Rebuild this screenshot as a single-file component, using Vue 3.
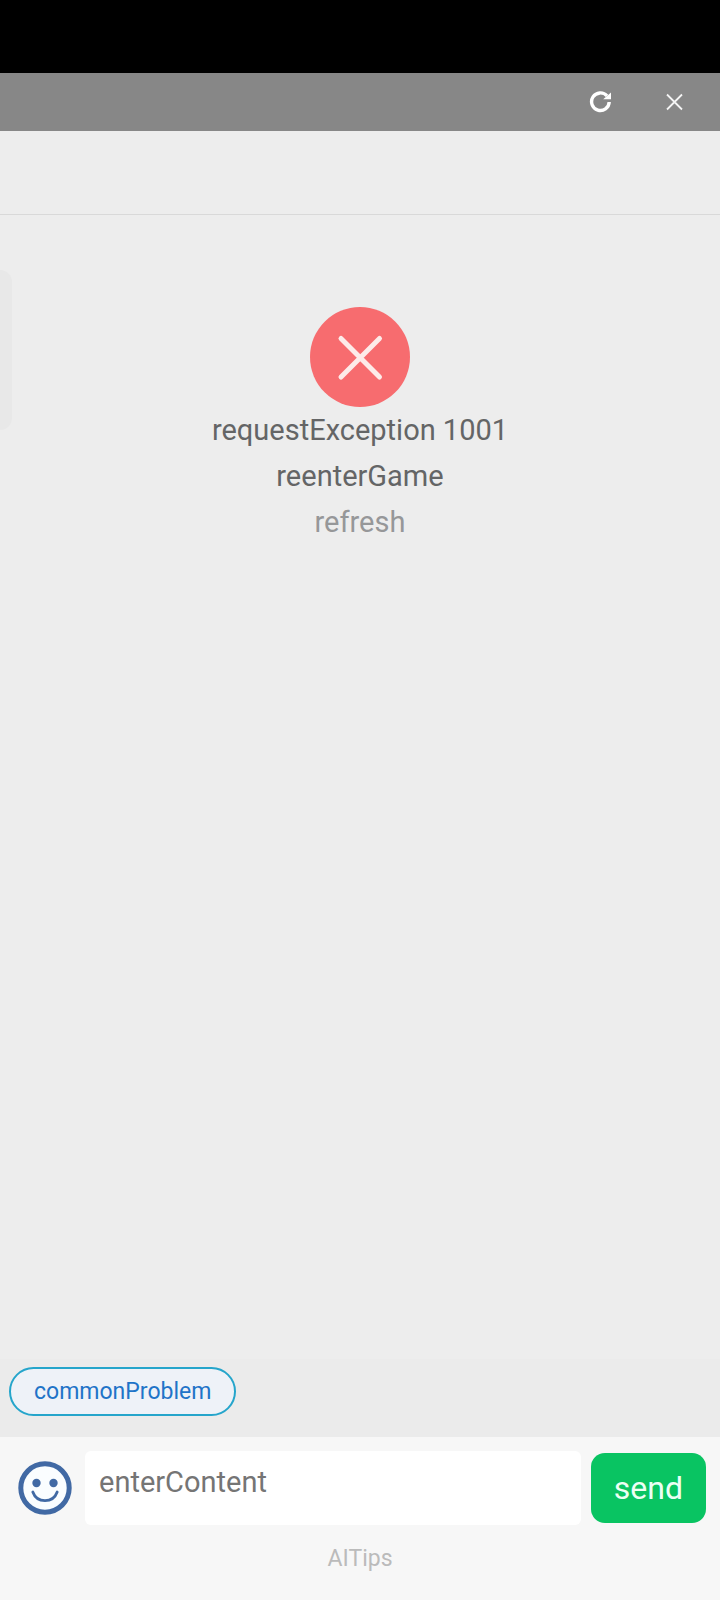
<script setup>
import { ref } from 'vue'

const message = ref('')
</script>

<template>
  <div class="page">
    <div class="status"></div>
    <div class="toolbar">
      <button class="tool" type="button" aria-label="Reload">
        <svg width="24" height="24" viewBox="0 0 24 24" fill="none">
          <path d="M20.2 12A8.800 8.800 0 1 1 18 5.900" stroke="#fff" stroke-width="3.4" />
          <path d="M22 2.500V9.300H14.200Z" fill="#fff" />
        </svg>
      </button>
      <button class="tool" type="button" aria-label="Close">
        <svg width="24" height="24" viewBox="0 0 24 24" fill="none">
          <path d="M5 4.500L20 19.500M20 4.500L5 19.500" stroke="#f4f4f4" stroke-width="1.8" />
        </svg>
      </button>
    </div>
    <header class="header"></header>
    <main class="content">
      <div class="drawer"></div>
      <section class="error">
        <svg width="100" height="100" viewBox="0 0 100 100" fill="none">
          <circle cx="50" cy="50" r="50" fill="#f76c6f" />
          <path d="M31 31.500L69.500 70M69.500 31.500L31 70" stroke="#fdebe9" stroke-width="5" stroke-linecap="round" />
        </svg>
        <p>requestException 1001</p>
        <p>reenterGame</p>
        <button class="refresh" type="button">refresh</button>
      </section>
    </main>
    <div class="shortcuts">
      <button class="chip" type="button">commonProblem</button>
    </div>
    <footer class="footer">
      <form class="composer" @submit.prevent>
        <button class="emoji" type="button" aria-label="Emoji">
          <svg width="54" height="54" viewBox="0 0 54 54" fill="none">
            <circle cx="27" cy="27" r="24.200" fill="#fafdff" stroke="#4169a4" stroke-width="5" />
            <circle cx="18.500" cy="22" r="4.200" fill="#4169a4" />
            <circle cx="35.500" cy="22" r="4.200" fill="#4169a4" />
            <path d="M14.800 31C19 42.500 35 42.500 39.200 31" stroke="#4169a4" stroke-width="2.800" stroke-linecap="round" />
          </svg>
        </button>
        <textarea v-model="message" class="entry" rows="1" placeholder="enterContent" aria-label="enterContent"></textarea>
        <button class="send" type="submit">send</button>
      </form>
      <p class="tips">AITips</p>
    </footer>
  </div>
</template>

<style>
body {
  margin: 0;
}
</style>

<style scoped>
.page {
  display: flex;
  flex-direction: column;
  min-height: 100vh;
  background: #ededed;
  color: #646566;
  font-family: Roboto, "Liberation Sans", sans-serif;
  font-size: 29px;
}

button,
textarea {
  margin: 0;
  padding: 0;
  border: 0;
  background: none;
  font-family: inherit;
}

p {
  margin: 0;
}

svg {
  display: block;
}

.status {
  height: 73px;
  background: #000;
}

.toolbar {
  display: flex;
  align-items: center;
  justify-content: flex-end;
  gap: 49px;
  height: 58px;
  padding-right: 34px;
  background: #878787;
}

.header {
  height: 83px;
  border-bottom: 1px solid #d9d9d9;
}

.content {
  position: relative;
  flex: 1;
  padding-top: 92px;
}

.drawer {
  position: absolute;
  top: 55px;
  left: 0;
  width: 12px;
  height: 160px;
  border-radius: 0 12px 12px 0;
  background: #e8e8e8;
}

.error {
  display: flex;
  flex-direction: column;
  align-items: center;
  line-height: 46px;
}

.refresh {
  color: #969799;
  font-size: 29px;
  line-height: 46px;
}

.shortcuts {
  padding: 8px 9px 21px;
  background: #ebebeb;
}

.chip {
  display: block;
  padding: 0 23px;
  border: 2px solid #25a5cb;
  border-radius: 25px;
  background: #eef2f8;
  color: #1f74c8;
  font-size: 23px;
  line-height: 45px;
}

.footer {
  padding: 14px 14px 27px;
  background: #f7f7f7;
}

.composer {
  display: flex;
  align-items: center;
}

.emoji {
  margin: 0 13px 0 4px;
}

.entry {
  flex: 1;
  min-width: 0;
  box-sizing: border-box;
  height: 74px;
  padding: 13px 14px;
  border-radius: 6px;
  outline: 0;
  background: #fff;
  color: #323233;
  font-size: 29px;
  line-height: 36px;
  resize: none;
}

.entry::placeholder {
  color: #757575;
}

.send {
  margin-left: 10px;
  padding: 0 23px;
  border-radius: 14px;
  background: #09c462;
  color: #ecfff4;
  font-size: 32px;
  line-height: 70px;
}

.tips {
  margin-top: 20px;
  color: #bbb;
  font-size: 23px;
  line-height: 28px;
  text-align: center;
}
</style>
